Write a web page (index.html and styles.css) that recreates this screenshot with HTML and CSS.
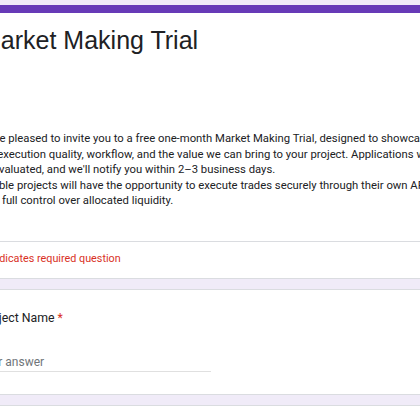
FILE: index.html
```html
<!DOCTYPE html>
<html>
<head>
<meta charset="utf-8">
<link rel="stylesheet" href="styles.css">
</head>
<body>
<div class="page">
  <div class="card header">
    <div class="accent"></div>
    <div class="head-main">
      <div class="title">Market Making Trial</div>
      <div class="desc">We're pleased to invite you to a free one-month Market Making Trial, designed to showcase<br>our execution quality, workflow, and the value we can bring to your project. Applications will<br>be evaluated, and we'll notify you within 2–3 business days.<br>Eligible projects will have the opportunity to execute trades securely through their own API keys<br>with full control over allocated liquidity.</div>
    </div>
    <div class="divider"></div>
    <div class="required">* Indicates required question</div>
  </div>
  <div class="card question">
    <div class="q-title">Project Name <span class="star">*</span></div>
    <div class="answer">Your answer</div>
  </div>
  <div class="card next"></div>
</div>
</body>
</html>
```
FILE: styles.css
```css
html, body {
  margin: 0;
  padding: 0;
  background: #f0ebf8;
  overflow: hidden;
  width: 420px;
  height: 420px;
}
.page {
  margin-left: -47px;
  width: 560px;
  padding-top: 5px;
  font-family: Roboto, "Liberation Sans", sans-serif;
  color: #202124;
}
.card {
  background: #fff;
  border: 1px solid #dadce0;
  border-radius: 8px;
  margin-bottom: 10px;
}
.header {
  border-top: none;
  overflow: hidden;
}
.accent {
  height: 8px;
  background: #673ab7;
}
.head-main {
  padding: 11px 24px 32px 24px;
}
.title {
  font-family: "Liberation Sans", Arial, sans-serif;
  font-size: 25px;
  line-height: 32px;
  margin-left: 2px;
}
.desc {
  margin-top: 75px;
  font-size: 11.3px;
  line-height: 15.5px;
  white-space: nowrap;
}
.divider {
  height: 1px;
  background: #dadce0;
}
.required {
  padding: 10px 24px 0 29px;
  height: 36px;
  box-sizing: border-box;
  font-size: 10.8px;
  line-height: 14px;
  color: #d93025;
}
.question {
  padding: 19px 24px 0 26px;
  height: 106px;
  box-sizing: border-box;
}
.q-title {
  font-size: 12.3px;
  line-height: 18px;
}
.star {
  color: #d93025;
}
.answer {
  margin-top: 28px;
  margin-left: -2px;
  width: 233px;
  font-size: 12px;
  line-height: 14px;
  color: #70757a;
  padding-bottom: 2px;
  border-bottom: 1px solid #e0e0e0;
}
.next {
  height: 40px;
}
```
